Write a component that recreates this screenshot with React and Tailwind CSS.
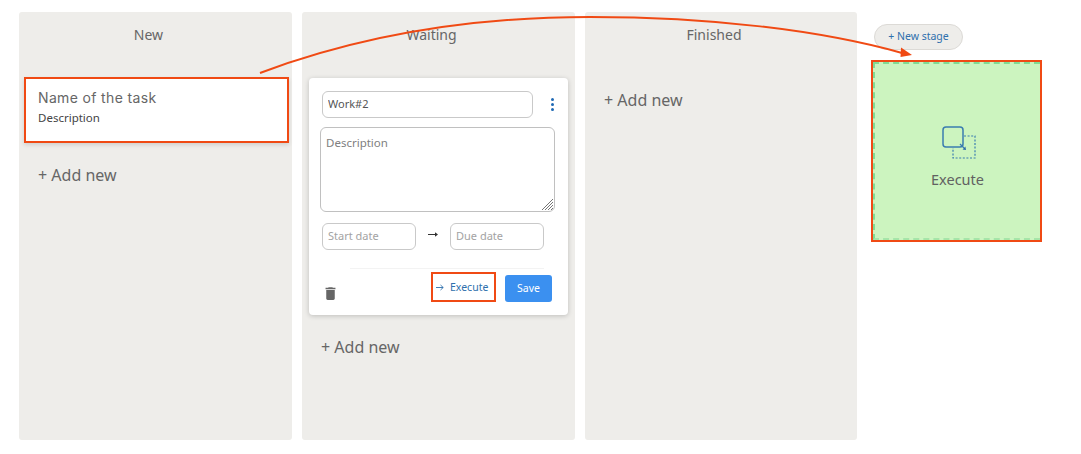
import React from "react";
import { MdDelete } from "react-icons/md";

const font = "font-['Noto_Sans',sans-serif]";

const AddNew = ({ className = "" }) => (
  <div className={`text-[16px] leading-[22px] text-[#666666] ${className}`}>+ Add new</div>
);

const Column = ({ title, width = "w-[273px]", children }) => (
  <div className={`${width} h-[428px] shrink-0 rounded-[3px] bg-[#eeedea] flex flex-col`}>
    <div className="h-[45px] pt-[13px] pr-[14px] text-center text-[14px] leading-[20px] text-[#666666]">{title}</div>
    {children}
  </div>
);

const DateInput = ({ placeholder }) => (
  <input
    placeholder={placeholder}
    className="w-[94px] h-[27px] px-[5px] pb-[2px] rounded-[6px] border border-[#c9c9c9] bg-white text-[11px] text-[#555555] placeholder:text-[#a3a3a3] outline-none"
  />
);

const ExecuteIcon = () => (
  <svg className="ml-[4px]" width="36" height="36" viewBox="0 0 36 36" fill="none">
    <rect x="1" y="1" width="20" height="20" rx="3" stroke="#3a7cb0" strokeWidth="1.5" />
    <path d="M22 10h11v22H11V22" stroke="#3a7cb0" strokeWidth="1.2" strokeDasharray="2 1.6" />
    <path d="M18 18l4 4" stroke="#3a7cb0" strokeWidth="1.2" />
    <path d="M24 24l-3.4-.6 2.8-2.8z" fill="#2a69a8" />
  </svg>
);

export default function App() {
  return (
    <div className={`relative w-[1081px] h-[454px] bg-white overflow-hidden ${font}`}>
      <div className="flex gap-[10px] pt-[12px] pl-[19px]">
        <Column title="New">
          <div className="ml-[5px] mt-[20px] w-[265px] h-[66px] bg-white border-[2px] border-[#f04a14] pl-[12px] pt-[9px] shadow-[0_2px_4px_rgba(0,0,0,0.12)]">
            <div className="font-['Inter',sans-serif] text-[14px] tracking-[0.35px] leading-[20px] text-[#666666]">Name of the task</div>
            <div className="text-[11.5px] leading-[18px] text-[#444444] mt-[1px]">Description</div>
          </div>
          <AddNew className="ml-[19px] mt-[21px]" />
        </Column>

        <Column title="Waiting">
          <div className="ml-[7px] mt-[21px] w-[259px] h-[237px] bg-white rounded-[4px] shadow-[0_1px_5px_rgba(0,0,0,0.2)] flex flex-col pt-[13px]">
            <div className="flex items-center pl-[13px]">
              <input
                defaultValue="Work#2"
                className="w-[211px] h-[27px] px-[5px] pb-[2px] rounded-[6px] border border-[#c9c9c9] text-[11px] text-[#555555] outline-none"
              />
              <div className="ml-[18px] flex flex-col gap-[2px]">
                <span className="size-[3px] rounded-full bg-[#1f69b4]" />
                <span className="size-[3px] rounded-full bg-[#1f69b4]" />
                <span className="size-[3px] rounded-full bg-[#1f69b4]" />
              </div>
            </div>
            <div className="relative ml-[11px] mt-[9px] w-[235px] h-[85px]">
              <textarea
                placeholder="Description"
                className="block resize-none w-full h-full px-[5px] py-[7px] rounded-[6px] border border-[#c0c0c0] text-[11.5px] leading-[16px] text-[#555555] placeholder:text-[#808080] outline-none"
              />
              <svg className="absolute right-[1px] bottom-[1px]" width="13" height="13" viewBox="0 0 13 13" stroke="#666666" strokeWidth="0.9">
                <path d="M1 12L12 1M4 12l8-8M7 12l5-5M10 12l2-2" />
              </svg>
            </div>
            <div className="flex items-center pl-[13px] mt-[11px]">
              <DateInput placeholder="Start date" />
              <span className="w-[34px] flex justify-center -mt-[5px]">
                <svg width="10" height="7" viewBox="0 0 10 7" fill="none">
                  <path d="M0 3.5h8" stroke="#333333" strokeWidth="1" />
                  <path d="M10 3.5L7 1.2v4.6z" fill="#333333" />
                </svg>
              </span>
              <DateInput placeholder="Due date" />
            </div>
            <div className="ml-[41px] mr-[24px] mt-[18px] h-px bg-[#f3f3f3]" />
            <div className="relative flex-1 flex items-start pl-[13px]">
              <MdDelete size={17} className="mt-[16px] text-[#666666]" />
              <div className="absolute left-[122px] top-[3px] w-[65px] h-[30px] border-[2px] border-[#f04a14] flex items-center pl-[3px] pt-[1px] gap-[6px] text-[10.5px] text-[#2f70ad]">
                <svg width="8" height="7" viewBox="0 0 8 7" fill="none" stroke="#2f70ad" strokeWidth="0.9">
                  <path d="M0 3.5h7.2M4.5 1l2.7 2.5L4.5 6" />
                </svg>
                <span>Execute</span>
              </div>
              <button className="absolute left-[196px] top-[6px] w-[47px] h-[27px] rounded-[3px] bg-[#3b90f0] text-white text-[10.5px]">Save</button>
            </div>
          </div>
          <AddNew className="ml-[19px] mt-[21px]" />
        </Column>

        <Column title="Finished" width="w-[272px]">
          <AddNew className="ml-[19px] mt-[32px]" />
        </Column>

        <div className="flex flex-col w-[171px] ml-[4px]">
          <button className="ml-[3px] mt-[12px] w-[89px] h-[26px] rounded-full bg-[#eeedea] border border-[#dcdad6] text-[10.5px] text-[#2f70ad]">+ New stage</button>
          <div className="mt-[10px] w-[171px] h-[182px] border-[2px] border-[#f04a14]">
            <div className="h-full border-[2px] border-r-0 border-dashed border-[#7fdc93] border-b-[#a5e5a8] bg-[#ccf4bf] flex flex-col items-center pt-[62px]">
              <ExecuteIcon />
              <div className="mt-[7px] text-[14.5px] leading-[20px] text-[#616161]">Execute</div>
            </div>
          </div>
        </div>
      </div>

      <svg className="absolute left-0 top-0 pointer-events-none" width="1081" height="454" fill="none">
        <path d="M260 73C380 28 500 17 590 17C710 17 820 30 902 53" stroke="#f04a14" strokeWidth="2" />
        <path d="M912 55L901 47.5L900.5 57z" fill="#f04a14" />
      </svg>
    </div>
  );
}
